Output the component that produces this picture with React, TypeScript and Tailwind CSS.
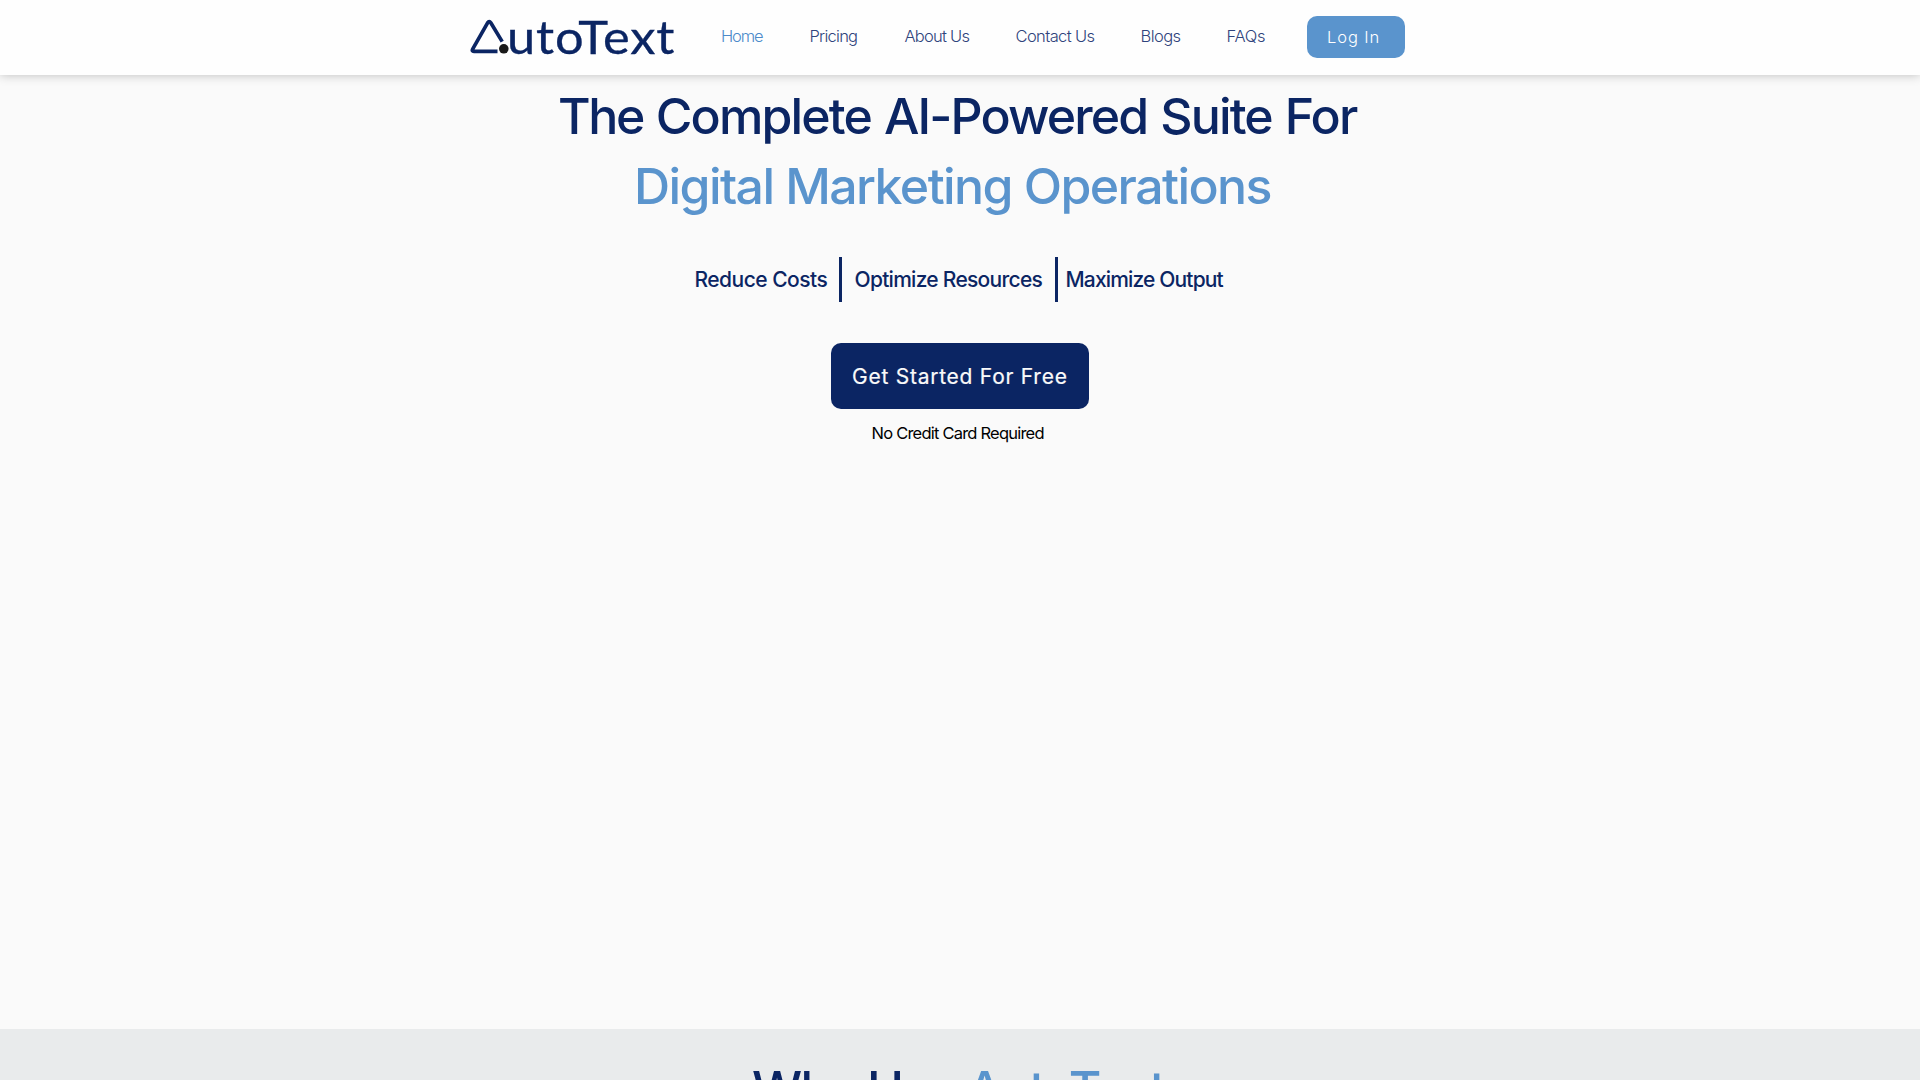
type NavItem = { label: string; box: string };

const navItems: NavItem[] = [
  { label: "Home", box: "w-[88.5px] tracking-[-1.15px] text-[#4b8aca]" },
  { label: "Pricing", box: "w-[95px] tracking-[-0.75px] text-[#2f437c]" },
  { label: "About Us", box: "w-[111px] tracking-[-0.75px] text-[#2f437c]" },
  { label: "Contact Us", box: "w-[125px] tracking-[-0.6px] text-[#2f437c]" },
  { label: "Blogs", box: "w-[86px] tracking-[-0.57px] text-[#2f437c]" },
  { label: "FAQs", box: "w-[80.5px] tracking-[-0.25px] text-[#2f437c]" },
];

function Logo() {
  return (
    <a className="flex h-[75px] w-[251px] shrink-0" aria-label="AutoText">
      <svg className="mt-[18px] h-[38px] w-[40px] shrink-0" viewBox="0 0 40 38" fill="none">
        <path
          d="M27.5 33.3H4Q1.4 33.3 2.8 30.9L17.6 4.8Q19.2 2.4 20.8 4.8L32.2 23.6"
          stroke="#0b2563"
          strokeWidth="3.7"
          strokeLinejoin="round"
        />
        <circle cx="33.8" cy="30.8" r="4.8" fill="#191919" />
      </svg>
      <span className="-ml-[3.5px] origin-left scale-x-[1.1] whitespace-nowrap font-['Lato'] text-[46px] leading-[73px] tracking-[0.8px] text-[#0b2563] [-webkit-text-stroke:0.3px_#0b2563]">
        utoText
      </span>
    </a>
  );
}

function Header() {
  return (
    <header className="relative z-10 flex h-[75px] bg-[#fefefe] pl-[470px] shadow-[0_0_10px_rgba(0,0,0,0.25)]">
      <Logo />
      <nav className="flex text-[16.5px] font-light leading-[73px]">
        {navItems.map((n) => (
          <a key={n.label} className={"shrink-0 whitespace-nowrap " + n.box}>
            {n.label}
          </a>
        ))}
      </nav>
      <button className="mt-4 h-[42px] w-[98px] shrink-0 rounded-[10px] bg-[#5a94cd] pl-5 text-left text-[16.5px] font-light leading-[43px] tracking-[0.9px] text-white">
        Log In
      </button>
    </header>
  );
}

function Hero() {
  return (
    <section className="h-[954px] bg-[#fafafa] pt-[6px]">
      <h1 className="whitespace-nowrap text-[50px] font-medium leading-[70px] text-[#0b2563]">
        <span className="block pl-[558px] tracking-[-1.85px] [word-spacing:1.4px]">
          <span className="tracking-[-2.4px]">The</span> Complete AI-Powered Suite For
        </span>
        <span className="block pl-[634px] tracking-[-1.58px] text-[#5a94cd]">Digital Marketing Operations</span>
      </h1>
      <div className="mt-9 flex h-[45px] whitespace-nowrap pl-[694.5px] text-[21px] font-medium leading-[46px] text-[#0b2563]">
        <p className="w-36 tracking-[-0.52px]">Reduce Costs</p>
        <div className="h-[45px] w-[3px] bg-[#0b2563]" />
        <p className="w-[213px] pl-[13px] tracking-[-0.72px]">Optimize Resources</p>
        <div className="h-[45px] w-[3px] bg-[#0b2563]" />
        <p className="pl-2 tracking-[-0.84px]">Maximize Output</p>
      </div>
      <button className="ml-[831px] mt-[41px] block h-[66px] w-[258px] whitespace-nowrap rounded-[10px] bg-[#0b2563] pl-[21px] text-left text-[21px] leading-[68px] tracking-[0.75px] text-[#fafafa] [-webkit-text-stroke:0.2px_#fafafa]">
        Get Started For Free
      </button>
      <p className="ml-[871.5px] mt-3 text-[16.5px] leading-6 tracking-[-0.78px] text-black">
        No Credit Card Required
      </p>
    </section>
  );
}

export default function App() {
  return (
    <div className="h-[1080px] overflow-hidden bg-[#fafafa] font-['Inter',sans-serif]">
      <Header />
      <Hero />
      <section className="h-[51px] overflow-hidden bg-[#e9ebec] pt-[25px]">
        <h2 className="whitespace-nowrap pl-[752px] text-[50px] font-medium leading-[70px] tracking-[-1.65px] text-[#0b2563]">
          Why Use <span className="text-[#5a94cd]">AutoText</span>
        </h2>
      </section>
    </div>
  );
}
